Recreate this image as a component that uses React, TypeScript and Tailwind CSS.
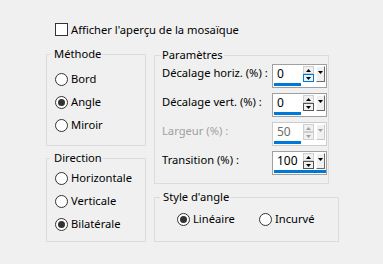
import React from 'react'

const font = { fontFamily: '"Noto Sans", "Open Sans", sans-serif' }

function Radio({ label, checked }: { label: string; checked?: boolean }) {
  return (
    <div className="flex h-[23px] items-center gap-[3px]">
      <span className="flex h-[13px] w-[13px] items-center justify-center rounded-full border border-[#333333] bg-white">
        {checked && <span className="h-[7px] w-[7px] rounded-full bg-[#333333]" />}
      </span>
      <span>{label}</span>
    </div>
  )
}

function Arrow({ up, color }: { up?: boolean; color: string }) {
  return (
    <svg width="5" height="3" viewBox="0 0 5 3">
      <polygon points={up ? '0,3 5,3 2.5,0' : '0,0 5,0 2.5,3'} fill={color} />
    </svg>
  )
}

function SpinBox({
  value,
  bar,
  disabled,
  focusDown
}: {
  value: string
  bar: string
  disabled?: boolean
  focusDown?: boolean
}) {
  const ink = disabled ? '#a0a0a0' : '#000000'
  return (
    <div
      className={`flex h-[24px] w-[55px] flex-col border bg-white pt-[1px] ${
        disabled ? 'border-[#cccccc]' : 'border-[#a0a0a0]'
      }`}
    >
      <div className="flex h-[16px] items-stretch">
        <span className={`flex-1 pl-[4px] text-[12px] leading-[16px] ${disabled ? 'text-[#6d6d6d]' : 'text-black'}`}>
          {value}
        </span>
        <div className="flex w-[11px] flex-col">
          <span className="flex h-[8px] items-center justify-center border border-[#d0d0d0] bg-[#f0f0f0]">
            <Arrow up color={ink} />
          </span>
          <span
            className={`flex h-[8px] items-center justify-center border ${
              focusDown ? 'border-[#0078d7] bg-[#e5f1fb]' : disabled ? 'border-[#d0d0d0] bg-[#f0f0f0]' : 'border-[#555555] bg-[#f0f0f0]'
            }`}
          >
            <Arrow color={ink} />
          </span>
        </div>
        <div
          className={`ml-[2px] mr-[1px] flex w-[9px] justify-center border-t border-l border-t-white border-l-white bg-[#f0f0f0] pt-[4px] ${
            disabled ? 'border-r border-b border-r-[#c8c8c8] border-b-[#c8c8c8]' : 'border-r border-b border-r-[#696969] border-b-[#696969]'
          }`}
        >
          <Arrow color={ink} />
        </div>
      </div>
      <div className={`ml-[1px] mt-[1px] h-[3px] bg-[#0078d7] ${bar}`} />
    </div>
  )
}

function ParamRow({
  label,
  value,
  bar,
  disabled,
  focusDown
}: {
  label: string
  value: string
  bar: string
  disabled?: boolean
  focusDown?: boolean
}) {
  return (
    <div className="flex h-[24px] items-start justify-between">
      <span className={`whitespace-nowrap pt-[1px] leading-[16px] ${disabled ? 'text-[#a0a0a0]' : 'text-black'}`}>
        {label}
      </span>
      <SpinBox value={value} bar={bar} disabled={disabled} focusDown={focusDown} />
    </div>
  )
}

export default function App() {
  return (
    <div className="h-[264px] w-[383px] bg-[#f0f0f0] pl-[46px] pt-[22px] text-[11.2px] text-black" style={font}>
      {/* Case à cocher */}
      <div className="ml-[9px] flex h-[15px] items-center gap-[3px]">
        <span className="h-[13px] w-[13px] border border-[#333333] bg-white" />
        <span className="leading-[15px]">Afficher l'aperçu de la mosaïque</span>
      </div>

      <div className="mt-[9px] flex items-start">
        {/* Colonne gauche */}
        <div className="flex w-[100px] flex-col gap-[4px]">
          <fieldset className="h-[100px] border border-[#dcdcdc]">
            <legend className="ml-[3px] pl-[4px] pr-[1px] leading-[16px]">Méthode</legend>
            <div className="mt-[6px] flex flex-col pl-[8px]">
              <Radio label="Bord" />
              <Radio label="Angle" checked />
              <Radio label="Miroir" />
            </div>
          </fieldset>
          <fieldset className="h-[92px] border border-[#dcdcdc]">
            <legend className="ml-[3px] pl-[4px] pr-[1px] leading-[16px]">Direction</legend>
            <div className="mt-[1px] flex flex-col pl-[8px]">
              <Radio label="Horizontale" />
              <Radio label="Verticale" />
              <Radio label="Bilatérale" checked />
            </div>
          </fieldset>
        </div>

        {/* Colonne droite */}
        <div className="ml-[8px] mt-[1px] flex flex-col items-start gap-[5px]">
          <fieldset className="h-[137px] w-[175px] border border-[#dcdcdc]">
            <legend className="ml-[6px] pl-[1px] pr-[1px] leading-[16px]">Paramètres</legend>
            <div className="mt-[1px] flex flex-col gap-[5px] pl-[7px] pr-[1px]">
              <ParamRow label="Décalage horiz. (%) :" value="0" bar="w-[27px]" focusDown />
              <ParamRow label="Décalage vert. (%) :" value="0" bar="w-[27px]" />
              <ParamRow label="Largeur (%) :" value="50" bar="w-[27px]" disabled />
              <ParamRow label="Transition (%) :" value="100" bar="w-[52px]" />
            </div>
          </fieldset>
          <fieldset className="h-[53px] w-[185px] border border-[#dcdcdc]">
            <legend className="ml-[5px] pl-[3px] pr-[1px] leading-[16px]">Style d'angle</legend>
            <div className="mt-[3px] flex items-center pl-[22px]">
              <div className="w-[82px]">
                <Radio label="Linéaire" checked />
              </div>
              <Radio label="Incurvé" />
            </div>
          </fieldset>
        </div>
      </div>
    </div>
  )
}
